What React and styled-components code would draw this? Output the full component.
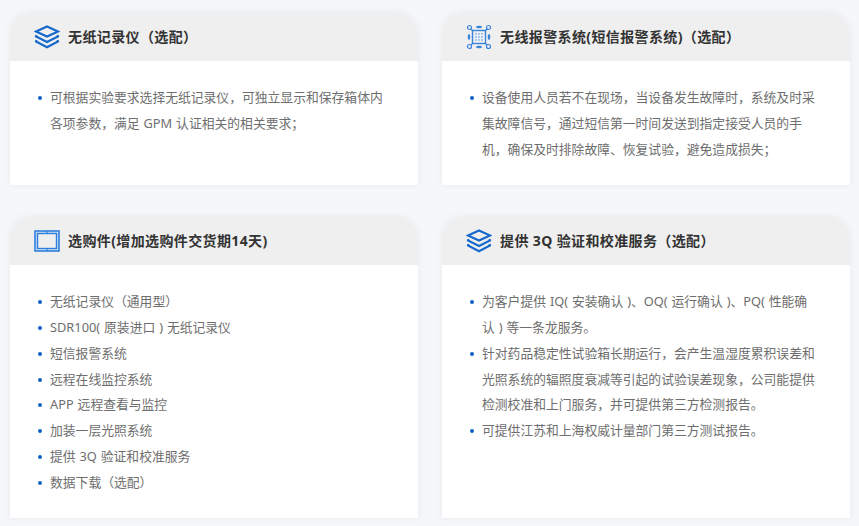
import React from "react";
import styled, { createGlobalStyle } from "styled-components";

const GlobalStyle = createGlobalStyle`
  html, body {
    margin: 0;
    padding: 0;
    background: #f6f7f8;
    font-family: "Noto Sans", "Noto Sans CJK SC", sans-serif;
  }
`;

const Grid = styled.div`
  width: 859px;
  height: 526px;
  box-sizing: border-box;
  padding: 12px 9px 8px 10px;
  display: grid;
  grid-template-columns: 408px 408px;
  grid-template-rows: 173px 302px;
  column-gap: 24px;
  row-gap: 31px;
  overflow: hidden;
`;

const Card = styled.section`
  background: #fff;
  border-radius: 22px 22px 0 0;
  box-shadow: 0 0 6px rgba(214, 226, 238, 0.55);
  overflow: hidden;
`;

const Header = styled.header`
  height: 49px;
  background: #efefef;
  display: flex;
  align-items: center;
  padding-left: 24px;
  gap: 8px;
`;

const IconBox = styled.span`
  width: 26px;
  height: 26px;
  flex: none;
  display: flex;
  align-items: center;
  justify-content: center;
`;

const Title = styled.h3`
  margin: 0 0 2px;
  font-size: 14px;
  font-weight: 700;
  letter-spacing: 0.38px;
  color: #333;
  white-space: nowrap;
`;

const List = styled.ul`
  list-style: none;
  margin: 0;
  padding: 24.4px 34px 0 40px;
`;

const Item = styled.li`
  position: relative;
  font-size: 12.8px;
  line-height: 25.75px;
  word-spacing: 0.6px;
  color: #6e6e6e;

  &::before {
    content: "";
    position: absolute;
    left: -12px;
    top: 11px;
    width: 4px;
    height: 4px;
    border-radius: 50%;
    background: #0f62c5;
  }
`;

const LayersIcon = () => (
  <svg width="26" height="24" viewBox="0 0 26 24" fill="none" stroke="#1569cc" strokeWidth="2.1" strokeLinejoin="miter">
    <path d="M13 1.5 L24 6.5 L13 11.5 L2 6.5 Z" />
    <path d="M2.5 10 L2 11.5 L13 17 L24 11.5 L23.5 10" />
    <path d="M2.5 15 L2 16.5 L13 22.3 L24 16.5 L23.5 15" />
  </svg>
);

const AlarmIcon = () => (
  <svg width="26" height="26" viewBox="0 0 26 26" fill="none" stroke="#3a84dc" strokeWidth="1.2">
    <rect x="6.5" y="6.5" width="13" height="13" strokeWidth="1.4" />
    <rect x="9" y="9" width="8" height="8" fill="#a9c9ef" stroke="none" />
    <path d="M9 11.5h8M9 14.5h8M11.5 9v8M14.5 9v8" stroke="#fff" strokeWidth="0.7" />
    <circle cx="3.5" cy="3.5" r="2" />
    <circle cx="22.5" cy="3.5" r="2" />
    <circle cx="3.5" cy="22.5" r="2" />
    <circle cx="22.5" cy="22.5" r="2" />
    <path d="M5 5l2 2M21 5l-2 2M5 21l2-2M21 21l-2-2" />
    <ellipse cx="13" cy="3" rx="3" ry="1.3" fill="#3a84dc" stroke="none" />
    <ellipse cx="13" cy="23" rx="3" ry="1.3" fill="#3a84dc" stroke="none" />
    <ellipse cx="3" cy="13" rx="1.3" ry="3" fill="#3a84dc" stroke="none" />
    <ellipse cx="23" cy="13" rx="1.3" ry="3" fill="#3a84dc" stroke="none" />
  </svg>
);

const ScreenIcon = () => (
  <svg width="26" height="22" viewBox="0 0 26 22" fill="none" stroke="#2f80de">
    <rect x="1" y="1" width="24" height="20" fill="#cfe0f5" strokeWidth="1.6" />
    <rect x="3.5" y="3.5" width="19" height="15" fill="#efefef" strokeWidth="1.4" />
    <path d="M13 1v2.5M13 18.5V21" strokeWidth="1.2" />
  </svg>
);

const cards = [
  {
    icon: <LayersIcon />,
    title: "无纸记录仪（选配）",
    items: ["可根据实验要求选择无纸记录仪，可独立显示和保存箱体内各项参数，满足 GPM 认证相关的相关要求；"],
  },
  {
    icon: <AlarmIcon />,
    title: "无线报警系统(短信报警系统)（选配）",
    items: ["设备使用人员若不在现场，当设备发生故障时，系统及时采集故障信号，通过短信第一时间发送到指定接受人员的手机，确保及时排除故障、恢复试验，避免造成损失；"],
  },
  {
    icon: <ScreenIcon />,
    title: "选购件(增加选购件交货期14天)",
    items: [
      "无纸记录仪（通用型）",
      "SDR100( 原装进口 ) 无纸记录仪",
      "短信报警系统",
      "远程在线监控系统",
      "APP 远程查看与监控",
      "加装一层光照系统",
      "提供 3Q 验证和校准服务",
      "数据下载（选配）",
    ],
  },
  {
    icon: <LayersIcon />,
    title: "提供 3Q 验证和校准服务（选配）",
    items: [
      "为客户提供 IQ( 安装确认 )、OQ( 运行确认 )、PQ( 性能确认 ) 等一条龙服务。",
      "针对药品稳定性试验箱长期运行，会产生温湿度累积误差和光照系统的辐照度衰减等引起的试验误差现象，公司能提供检测校准和上门服务，并可提供第三方检测报告。",
      "可提供江苏和上海权威计量部门第三方测试报告。",
    ],
  },
];

export default function App() {
  return (
    <>
      <GlobalStyle />
      <Grid>
        {cards.map((card) => (
          <Card key={card.title}>
            <Header>
              <IconBox>{card.icon}</IconBox>
              <Title>{card.title}</Title>
            </Header>
            <List>
              {card.items.map((text) => (
                <Item key={text}>{text}</Item>
              ))}
            </List>
          </Card>
        ))}
      </Grid>
    </>
  );
}
